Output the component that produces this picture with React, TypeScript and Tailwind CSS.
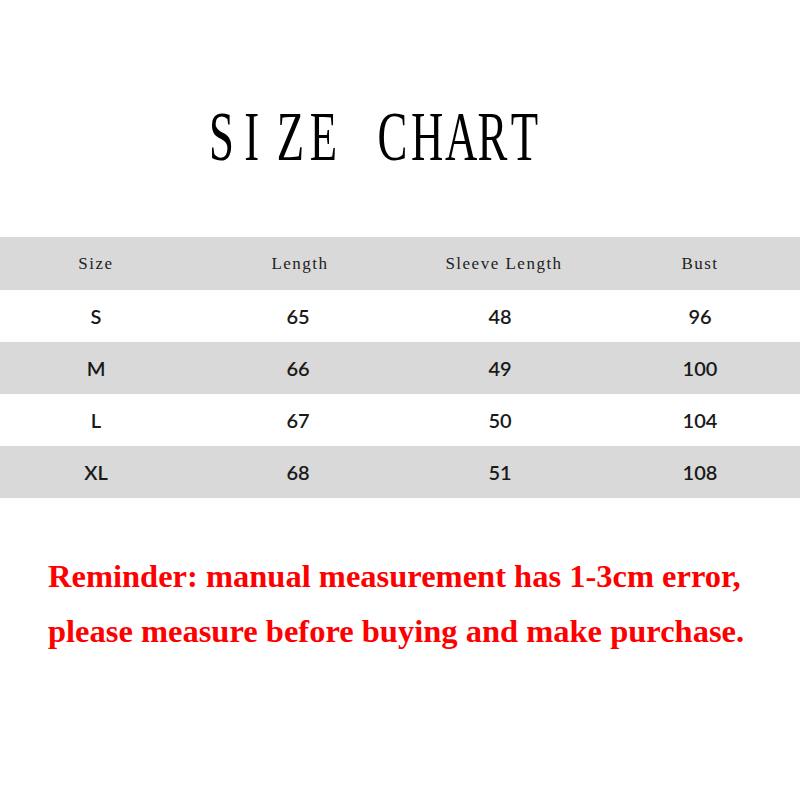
const rows = [
  { size: 'S', length: '65', sleeve: '48', bust: '96' },
  { size: 'M', length: '66', sleeve: '49', bust: '100' },
  { size: 'L', length: '67', sleeve: '50', bust: '104' },
  { size: 'XL', length: '68', sleeve: '51', bust: '108' },
];

const title = 'SIZE CHART'.split('');

export default function App() {
  return (
    <div className="w-[800px] h-[800px] bg-white overflow-hidden">
      {/* Title, set as a monospaced serif */}
      <div className="pt-[102px] pl-[202px]">
        <h1 className="flex text-[70px] leading-none text-black [font-family:'Liberation_Serif',serif]">
          {title.map((c, i) => (
            <span key={i} className="inline-block w-[33.4px] text-center">
              <span className="inline-block scale-x-[0.64]">{c === ' ' ? '\u00a0' : c}</span>
            </span>
          ))}
        </h1>
      </div>

      {/* Table */}
      <div className="mt-[65px]">
        <div className="grid grid-cols-4 h-[53px] items-center bg-[#d9d9d9] text-[17px] tracking-[1.5px] text-[#222] [font-family:'Liberation_Serif',serif]">
          <div className="text-center pr-2">Size</div>
          <div className="text-center">Length</div>
          <div className="text-center pl-2">Sleeve Length</div>
          <div className="text-center">Bust</div>
        </div>
        {rows.map((r, i) => (
          <div
            key={r.size}
            className={
              'grid grid-cols-4 h-[52px] items-center text-[20px] font-semibold text-[#1a1a1a] [font-family:Lato,sans-serif] ' +
              (i % 2 === 1 ? 'bg-[#d9d9d9]' : 'bg-white')
            }
          >
            <div className="text-center pr-2">{r.size}</div>
            <div className="text-center pr-1">{r.length}</div>
            <div className="text-center">{r.sleeve}</div>
            <div className="text-center">{r.bust}</div>
          </div>
        ))}
      </div>

      {/* Reminder */}
      <div className="mt-[51px] pl-[48px] text-[32.5px] leading-[55px] font-bold text-[#f00] [font-family:'Liberation_Serif',serif]">
        <p>Reminder: manual measurement has 1-3cm error,</p>
        <p>please measure before buying and make purchase.</p>
      </div>
    </div>
  );
}
